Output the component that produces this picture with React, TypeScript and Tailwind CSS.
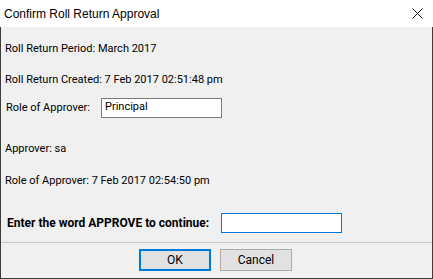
import React from 'react';

const body = { fontFamily: 'Roboto, "Liberation Sans", Arial, sans-serif' };
const title = { fontFamily: '"Liberation Sans", Arial, sans-serif' };

export default function App() {
  return (
    <div className="w-[433px] h-[279px] bg-white text-[11px] text-black" style={body}>
      {/* title bar */}
      <div className="h-[27px] flex items-center justify-between bg-white pl-[4px] pr-[10px]">
        <span className="text-[12px]" style={title}>Confirm Roll Return Approval</span>
        <svg width="11" height="11" viewBox="0 0 11 11" className="block">
          <path d="M0.5 0.5 L10.5 10.5 M10.5 0.5 L0.5 10.5" stroke="#111" strokeWidth="1" />
        </svg>
      </div>

      {/* body */}
      <div className="h-[252px] flex flex-col bg-[#f0f0f0] border-x border-b border-[#3c3c3c]">
        <div className="h-[215px] flex flex-col px-[4px]">
          <div className="mt-[12px] h-[20px] flex items-center">Roll Return Period: March 2017</div>
          <div className="mt-[11px] h-[20px] flex items-center">Roll Return Created: 7 Feb 2017 02:51:48 pm</div>
          <div className="mt-[8px] h-[20px] flex items-center pl-[1px]">
            <span className="w-[95px] shrink-0">Role of Approver:</span>
            <div className="w-[121px] h-[20px] shrink-0 bg-white border border-[#7a7a7a] flex items-center pl-[3px] pb-[2px]">Principal</div>
          </div>
          <div className="mt-[21px] h-[20px] flex items-center">Approver: sa</div>
          <div className="mt-[12px] h-[20px] flex items-center">Role of Approver: 7 Feb 2017 02:54:50 pm</div>
          <div className="mt-[22px] h-[20px] flex items-center pl-[2px]">
            <span className="w-[214px] shrink-0 font-bold text-[12px] whitespace-nowrap">Enter the word APPROVE to continue:</span>
            <div className="w-[121px] h-[20px] shrink-0 bg-white border border-[#0078d7]" />
          </div>
        </div>
        <div className="h-px bg-[#c8c8c8]" />
        <div className="flex-1 flex justify-center items-start pt-[6px] gap-[9px] pr-[2px] text-[12px]">
          <button className="w-[72px] h-[22px] bg-[#e1e1e1] border-2 border-[#0078d7] flex items-center justify-center">OK</button>
          <button className="w-[72px] h-[22px] bg-[#e1e1e1] border border-[#adadad] flex items-center justify-center">Cancel</button>
        </div>
      </div>
    </div>
  );
}
